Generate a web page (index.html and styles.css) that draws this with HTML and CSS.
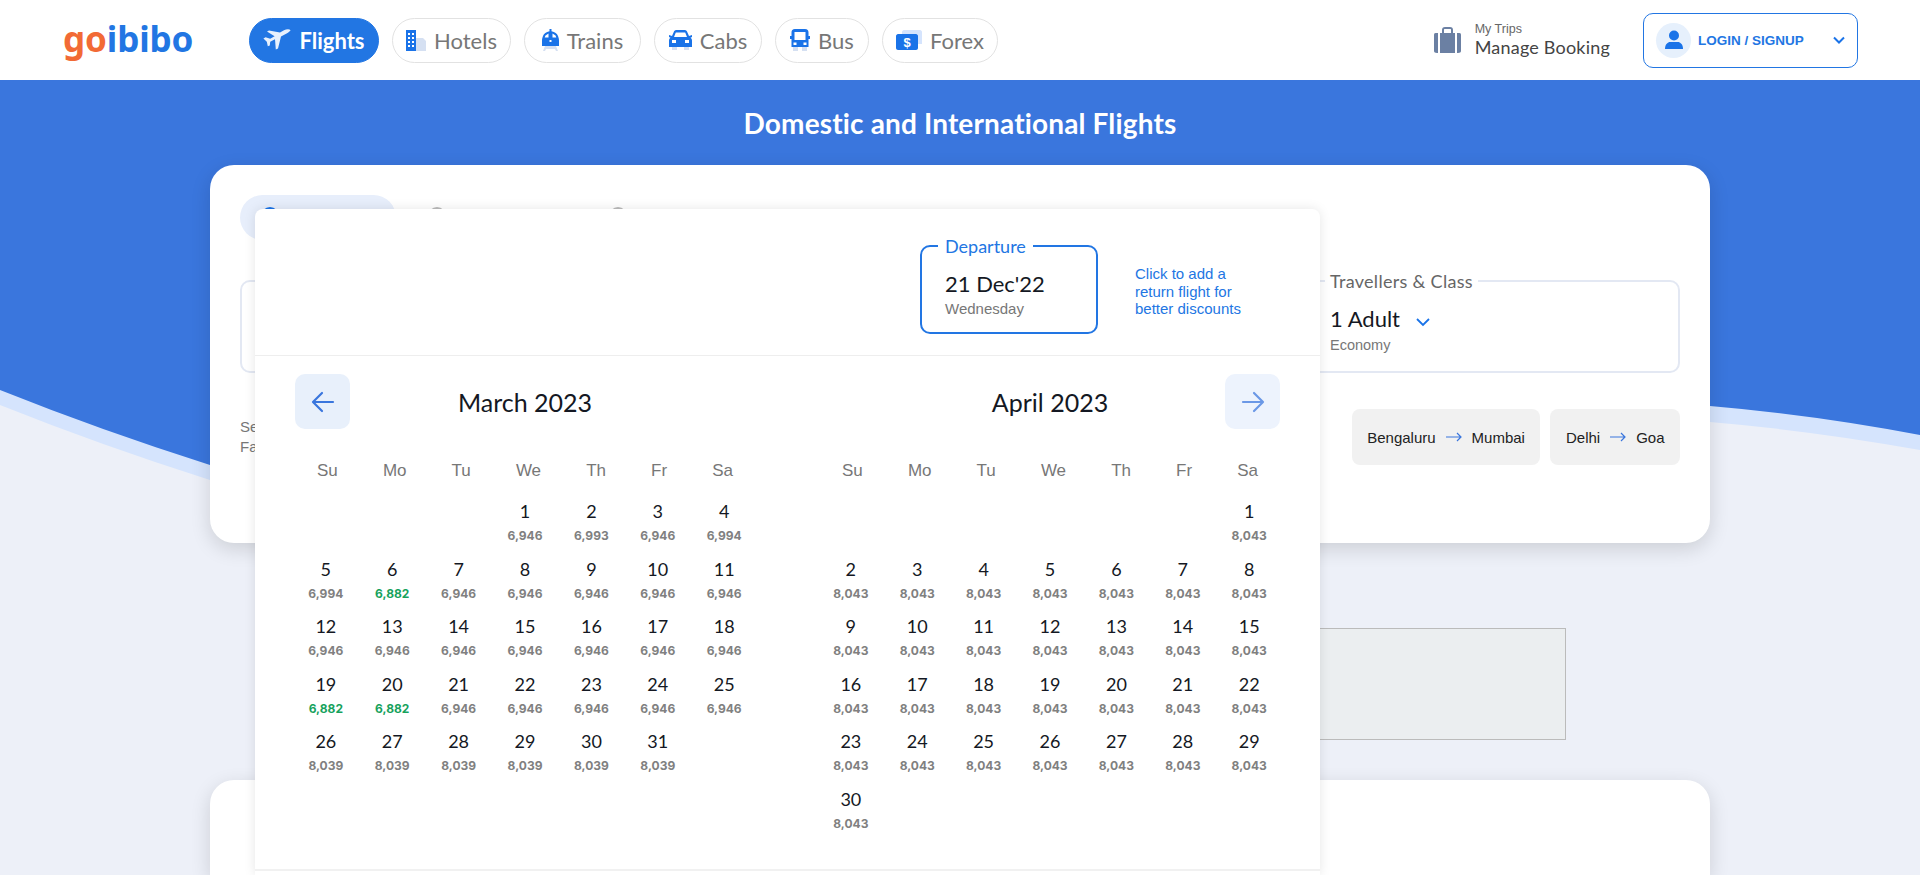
FILE: index.html
```html
<!DOCTYPE html>
<html lang="en">
<head>
	<meta charset="utf-8">
	<title>goibibo - Domestic and International Flights</title>
	<link rel="stylesheet" href="styles.css">
</head>
<body>
	<svg class="wave" width="1920" height="875" viewBox="0 0 1920 875">
		<path fill="#d5e4fd" d="M0 80H1920V450Q1815 431 1710 422L210 480Q100 445 0 405Z"/>
		<path fill="#3a76dd" d="M0 80H1920V435Q1815 415 1710 406L210 465Q100 430 0 390Z"/>
	</svg>
	<header class="topbar">
		<div class="logo"><span class="logo-go">go</span>ibibo</div>
		<nav class="tabs">
			<a class="tab active tab-flights"><svg width="28" height="22" viewBox="0 0 28 22"><path fill="#e8f1fd" d="M27.6 1.2C26.4-.2 23.4 0 21 1.3l-4 2.3L6 1.4 4 2.6l7.6 4.6-4.4 2.6-4.6-1.6L.4 9.4l3.4 3.4 1 4.4 2-.8.4-3.6 4.8-2.6.8 10.4 2.2-1L18 7.4l5.6-3c2-1 3.4-2.2 4-3.2z"/></svg>Flights</a>
			<a class="tab tab-hotels"><svg width="20" height="22" viewBox="0 0 20 22"><path fill="#d5e0f2" d="M9 9h8l3 3v10H9z"/><path fill="#1a73e8" d="M0 1h10v21H0z"/><path fill="#fff" d="M2 4h2v2H2zM6 4h2v2H6zM2 8h2v2H2zM6 8h2v2H6zM2 12h2v2H2zM6 12h2v2H6zM2 16h2v2H2zM6 16h2v2H6z"/></svg>Hotels</a>
			<a class="tab tab-trains"><svg width="17" height="22" viewBox="0 0 17 22"><path fill="#d5e0f2" d="M3 17h11l2 5h-2l-1-2H4l-1 2H1z"/><path fill="#1a73e8" d="M7.5 0h2v2.2C13 3 15 4.500 16 7c.6 1.500 1 3 1 5v5H0v-5c0-2 .4-3.500 1-5 1-2.500 3-4 6.500-4.800z"/><path fill="#fff" d="M3.500 6.500l3-2v4h-3.800zM13.500 6.500l-3-2v4h3.800zM7.500 11h2v2h-2z"/></svg>Trains</a>
			<a class="tab tab-cabs"><svg width="23" height="20" viewBox="0 0 23 20"><path fill="#d5e0f2" d="M3 16h5v4H3zM15 16h5v4h-5z"/><path fill="#1a73e8" d="M5 1.500C5.500.5 6.500 0 7.500 0h8c1 0 2 .5 2.500 1.500L20 6l3-1v2l-1.500.8c1 .7 1.500 1.700 1.500 3V17H0v-6.200c0-1.300.5-2.300 1.500-3L0 7V5l3 1z"/><path fill="#fff" d="M6.800 2.500h9.400L18 7H5zM3 10h4v3H3zM16 10h4v3h-4z"/></svg>Cabs</a>
			<a class="tab tab-bus"><svg width="20" height="22" viewBox="0 0 20 22"><path fill="#d5e0f2" d="M3 17h5v5H3zM12 17h5v5h-5z"/><path fill="#1a73e8" d="M5 0h10c2.500 0 3.500 1.500 3.500 3.500V7H20v3h-1.500v8h-17v-8H0V7h1.500V3.500C1.500 1.500 2.500 0 5 0z"/><path fill="#fff" d="M4.500 3h11v8h-11zM3.500 13.500h3v2.500h-3zM13.500 13.500h3v2.500h-3z"/></svg>Bus</a>
			<a class="tab tab-forex"><svg width="26" height="20" viewBox="0 0 26 20"><path fill="#d5e4fd" d="M8 0h16c1 0 2 1 2 2v12H6V2c0-1 1-2 2-2z"/><path fill="#1a73e8" d="M2 4h18c1 0 2 1 2 2v12c0 1-1 2-2 2H2c-1 0-2-1-2-2V6c0-1 1-2 2-2z"/><text x="11" y="17" class="forex-sign">$</text></svg>Forex</a>
		</nav>
		<a class="trips">
			<svg class="trips-icon" viewBox="0 0 27 26"><path fill="#6b80a3" d="M8 6V3c0-2 1-3 3-3h5c2 0 3 1 3 3v3h-2V3c0-1 0-1-1-1h-5c-1 0-1 0-1 1v3zM0 8c0-2 1-2 3-2h1v20H3c-2 0-3-1-3-2zM6 6h15v20H6zM23 6h1c2 0 3 0 3 2v16c0 1-1 2-3 2h-1z"/></svg>
			<span class="trips-text"><small>My Trips</small><b>Manage Booking</b></span>
		</a>
		<a class="login">
			<span class="avatar"><svg width="20" height="20" viewBox="0 0 20 20"><circle cx="10" cy="5.500" r="5" fill="#1a73e8"/><path fill="#1a73e8" d="M1 19c0-5 3-7 5-7h8c2 0 5 2 5 7z"/></svg></span>
			<span class="login-label">LOGIN / SIGNUP</span>
			<svg class="chevron" width="12" height="8" viewBox="0 0 12 8"><path d="M1 1.500l5 5 5-5" fill="none" stroke="#1a73e8" stroke-width="2"/></svg>
		</a>
	</header>

	<main class="page">
		<h1 class="hero-title">Domestic and International Flights</h1>
		<section class="card search">
			<div class="trip-type">
				<span class="pill"><span class="radio on"></span></span>
				<span class="radio second"></span>
				<span class="radio third"></span>
			</div>
			<div class="search-row">
				<fieldset class="field from"></fieldset>
				<fieldset class="field travellers">
					<legend>Travellers &amp; Class</legend>
					<div class="adult">1 Adult <svg width="14" height="9" viewBox="0 0 14 9"><path d="M1 1l6 6 6-6" fill="none" stroke="#1a73e8" stroke-width="1.800"/></svg></div>
					<div class="econ">Economy</div>
				</fieldset>
			</div>
			<div class="fare-row">
				<p class="fare-note">Select a<br>Fare</p>
				<div class="chips">
					<a class="chip">Bengaluru <svg width="16" height="10" viewBox="0 0 16 10"><path d="M0 5h15M11 1l4 4-4 4" fill="none" stroke="#3a76dd" stroke-width="1.200"/></svg> Mumbai</a>
					<a class="chip">Delhi <svg width="16" height="10" viewBox="0 0 16 10"><path d="M0 5h15M11 1l4 4-4 4" fill="none" stroke="#3a76dd" stroke-width="1.200"/></svg> Goa</a>
				</div>
			</div>
		</section>
		<div class="ad-slot"></div>
		<section class="card lower"></section>
	</main>

	<section class="calendar">
		<div class="cal-head">
			<div class="dep-box">
				<span class="dep-label">Departure</span>
				<div class="dep-date">21 Dec'22</div>
				<div class="dep-day">Wednesday</div>
			</div>
			<p class="return-note">Click to add a<br>return flight for<br>better discounts</p>
		</div>
		<div class="months">
			<div class="month">
				<div class="month-head">
					<a class="nav-btn"><svg width="24" height="22" viewBox="0 0 24 22"><path d="M22 11H3M11 2l-9 9 9 9" fill="none" stroke="#3a76dd" stroke-width="2.200" stroke-linecap="round" stroke-linejoin="round"/></svg></a>
					<h2>March 2023</h2>
				</div>
				<div class="week"><span>Su</span><span>Mo</span><span>Tu</span><span>We</span><span>Th</span><span>Fr</span><span>Sa</span></div>
				<div class="days">
					<div></div><div></div><div></div>
					<div><b>1</b><i>6,946</i></div><div><b>2</b><i>6,993</i></div><div><b>3</b><i>6,946</i></div><div><b>4</b><i>6,994</i></div>
					<div><b>5</b><i>6,994</i></div><div class="low"><b>6</b><i>6,882</i></div><div><b>7</b><i>6,946</i></div><div><b>8</b><i>6,946</i></div><div><b>9</b><i>6,946</i></div><div><b>10</b><i>6,946</i></div><div><b>11</b><i>6,946</i></div>
					<div><b>12</b><i>6,946</i></div><div><b>13</b><i>6,946</i></div><div><b>14</b><i>6,946</i></div><div><b>15</b><i>6,946</i></div><div><b>16</b><i>6,946</i></div><div><b>17</b><i>6,946</i></div><div><b>18</b><i>6,946</i></div>
					<div class="low"><b>19</b><i>6,882</i></div><div class="low"><b>20</b><i>6,882</i></div><div><b>21</b><i>6,946</i></div><div><b>22</b><i>6,946</i></div><div><b>23</b><i>6,946</i></div><div><b>24</b><i>6,946</i></div><div><b>25</b><i>6,946</i></div>
					<div><b>26</b><i>8,039</i></div><div><b>27</b><i>8,039</i></div><div><b>28</b><i>8,039</i></div><div><b>29</b><i>8,039</i></div><div><b>30</b><i>8,039</i></div><div><b>31</b><i>8,039</i></div>
				</div>
			</div>
			<div class="month">
				<div class="month-head">
					<h2>April 2023</h2>
					<a class="nav-btn next"><svg width="24" height="22" viewBox="0 0 24 22"><path d="M2 11h19M13 2l9 9-9 9" fill="none" stroke="#6b98e6" stroke-width="2.200" stroke-linecap="round" stroke-linejoin="round"/></svg></a>
				</div>
				<div class="week"><span>Su</span><span>Mo</span><span>Tu</span><span>We</span><span>Th</span><span>Fr</span><span>Sa</span></div>
				<div class="days">
					<div></div><div></div><div></div><div></div><div></div><div></div>
					<div><b>1</b><i>8,043</i></div>
					<div><b>2</b><i>8,043</i></div><div><b>3</b><i>8,043</i></div><div><b>4</b><i>8,043</i></div><div><b>5</b><i>8,043</i></div><div><b>6</b><i>8,043</i></div><div><b>7</b><i>8,043</i></div><div><b>8</b><i>8,043</i></div>
					<div><b>9</b><i>8,043</i></div><div><b>10</b><i>8,043</i></div><div><b>11</b><i>8,043</i></div><div><b>12</b><i>8,043</i></div><div><b>13</b><i>8,043</i></div><div><b>14</b><i>8,043</i></div><div><b>15</b><i>8,043</i></div>
					<div><b>16</b><i>8,043</i></div><div><b>17</b><i>8,043</i></div><div><b>18</b><i>8,043</i></div><div><b>19</b><i>8,043</i></div><div><b>20</b><i>8,043</i></div><div><b>21</b><i>8,043</i></div><div><b>22</b><i>8,043</i></div>
					<div><b>23</b><i>8,043</i></div><div><b>24</b><i>8,043</i></div><div><b>25</b><i>8,043</i></div><div><b>26</b><i>8,043</i></div><div><b>27</b><i>8,043</i></div><div><b>28</b><i>8,043</i></div><div><b>29</b><i>8,043</i></div>
					<div><b>30</b><i>8,043</i></div>
				</div>
			</div>
		</div>
		<div class="cal-foot"></div>
	</section>
</body>
</html>
```

FILE: styles.css
```css
* {
	box-sizing: border-box;
}
html, body {
	height: 875px;
	overflow: hidden;
}
body {
	margin: 0;
	position: relative;
	background: #edf0f8;
	color: #141823;
	font-family: Lato, "Noto Sans", sans-serif;
}
.wave {
	position: absolute;
	left: 0;
	top: 0;
}

/* top bar */
.topbar {
	position: relative;
	display: flex;
	align-items: center;
	height: 80px;
	padding: 0 62px 0 63px;
	background: #fff;
}
.logo {
	width: 186px;
	margin-top: -3px;
	color: #2276e3;
	font-family: "Noto Sans", sans-serif;
	font-size: 35px;
	font-weight: 700;
	letter-spacing: -0.1px;
}
.logo-go {
	color: #f26a35;
}
.tabs {
	display: flex;
	gap: 13px;
}
.tab {
	display: flex;
	align-items: center;
	justify-content: center;
	gap: 8px;
	height: 45px;
	border: 1px solid #e2e2e2;
	border-radius: 23px;
	color: #777;
	font-size: 22px;
}
.tab.active {
	border-color: #2276e3;
	background: #2276e3;
	color: #fff;
	font-weight: 700;
}
.tab-flights { width: 130px; }
.tab-hotels { width: 119px; }
.tab-trains { width: 117px; }
.tab-cabs { width: 108px; }
.tab-bus { width: 94px; }
.tab-forex { width: 116px; }
.forex-sign {
	fill: #fff;
	font-family: "Liberation Sans", sans-serif;
	font-size: 13px;
	font-weight: 700;
	text-anchor: middle;
}
.trips {
	display: flex;
	align-items: center;
	gap: 14px;
	margin-left: auto;
	margin-right: 33px;
}
.trips-icon {
	width: 27px;
	height: 26px;
}
.trips-text small {
	display: block;
	color: #666;
	font-family: "Liberation Sans", sans-serif;
	font-size: 12.5px;
}
.trips-text b {
	display: block;
	color: #444;
	font-size: 18px;
	font-weight: 400;
	letter-spacing: 0.2px;
}
.login {
	display: flex;
	align-items: center;
	width: 215px;
	height: 55px;
	padding: 0 12px;
	border: 1px solid #2276e3;
	border-radius: 10px;
}
.avatar {
	display: flex;
	align-items: center;
	justify-content: center;
	width: 35px;
	height: 35px;
	border-radius: 50%;
	background: #e6f0fc;
}
.login-label {
	margin-left: 7px;
	color: #2276e3;
	font-family: "Liberation Sans", sans-serif;
	font-size: 13.5px;
	font-weight: 700;
}
.chevron {
	margin-left: auto;
}

/* page behind the calendar */
.page {
	position: relative;
	width: 1500px;
	margin: 0 auto;
}
.hero-title {
	height: 85px;
	margin: 0;
	padding-top: 24px;
	color: #fff;
	font-size: 28px;
	font-weight: 700;
	letter-spacing: 0.15px;
	line-height: 38px;
	text-align: center;
}
.card {
	border-radius: 24px;
	background: #fff;
	box-shadow: 0 6px 20px rgba(0, 0, 0, 0.14);
}
.search {
	height: 378px;
	padding: 30px 30px 0;
}
.trip-type {
	display: flex;
	align-items: flex-start;
	height: 85px;
}
.pill {
	display: block;
	width: 156px;
	height: 45px;
	padding: 12px 0 0 21px;
	border-radius: 23px;
	background: #e7eefb;
}
.radio {
	display: block;
	width: 18px;
	height: 18px;
	border-radius: 50%;
	background: #bbb;
}
.radio.on {
	background: #1a73e8;
}
.radio.second {
	margin: 12px 0 0 32px;
}
.radio.third {
	margin: 12px 0 0 163px;
}
.search-row {
	display: flex;
	justify-content: space-between;
}
.field {
	height: 93px;
	margin: 0;
	padding: 0;
	border: 2px solid #e3e8f3;
	border-radius: 10px;
}
.from {
	width: 300px;
}
.travellers {
	width: 370px;
	padding: 0 0 0 13px;
}
.travellers legend {
	padding: 0 5px;
	color: #666;
	font-size: 18px;
	letter-spacing: 0.3px;
	line-height: 2px;
}
.adult {
	margin-top: 23px;
	padding-left: 5px;
	color: #141823;
	font-size: 22px;
	line-height: 28px;
}
.adult svg {
	margin-left: 10px;
}
.econ {
	margin-top: 4px;
	padding-left: 5px;
	color: #777;
	font-family: "Liberation Sans", sans-serif;
	font-size: 14.5px;
}
.fare-row {
	display: flex;
	justify-content: space-between;
	margin-top: 36px;
}
.fare-note {
	margin: 8px 0 0;
	color: #777;
	font-family: "Liberation Sans", sans-serif;
	font-size: 15px;
	line-height: 20px;
}
.chips {
	display: flex;
	gap: 10px;
}
.chip {
	display: flex;
	align-items: center;
	gap: 10px;
	height: 56px;
	padding: 0 15.5px;
	border-radius: 8px;
	background: #f1f1f1;
	color: #222;
	font-family: "Liberation Sans", sans-serif;
	font-size: 15px;
}
.ad-slot {
	width: 1200px;
	height: 112px;
	margin: 85px 0 0 156px;
	border: 1px solid #bbb;
	background: #ebeef0;
}
.lower {
	height: 95px;
	margin-top: 40px;
	border-radius: 24px 24px 0 0;
}

/* calendar popup */
.calendar {
	position: absolute;
	left: 255px;
	top: 209px;
	width: 1065px;
	height: 666px;
	border-radius: 8px 8px 0 0;
	background: #fff;
	box-shadow: 0 0 12px rgba(0, 0, 0, 0.1);
}
.cal-head {
	display: flex;
	align-items: flex-start;
	height: 147px;
	padding: 36px 0 0 665px;
	border-bottom: 1px solid #eee;
}
.dep-box {
	position: relative;
	width: 178px;
	height: 89px;
	padding: 23px 0 0 23px;
	border: 2px solid #2276e3;
	border-radius: 10px;
}
.dep-label {
	position: absolute;
	left: 16px;
	top: -12px;
	padding: 0 7px;
	background: #fff;
	color: #2276e3;
	font-size: 18px;
	line-height: 22px;
}
.dep-date {
	font-size: 22px;
	line-height: 28px;
}
.dep-day {
	margin-top: 2px;
	color: #777;
	font-family: "Liberation Sans", sans-serif;
	font-size: 15px;
}
.return-note {
	margin: 20px 0 0 37px;
	color: #2276e3;
	font-family: "Liberation Sans", sans-serif;
	font-size: 15px;
	line-height: 17.5px;
}
.months {
	display: flex;
	gap: 65px;
	height: 513px;
	padding: 0 40px;
}
.month {
	width: 460px;
}
.month-head {
	position: relative;
	display: flex;
	align-items: center;
	justify-content: center;
	height: 55px;
	margin-top: 18px;
}
.month-head h2 {
	margin: 0;
	font-size: 25px;
	font-weight: 400;
}
.nav-btn {
	position: absolute;
	left: 0;
	top: 0;
	display: flex;
	align-items: center;
	justify-content: center;
	width: 55px;
	height: 55px;
	border-radius: 10px;
	background: #e8f0fb;
}
.nav-btn.next {
	left: auto;
	right: 0;
	background: #edf3fd;
}
.week {
	display: flex;
	justify-content: space-between;
	margin: 32px 22px 0;
	color: #777;
	font-family: "Liberation Sans", sans-serif;
	font-size: 17px;
	line-height: 20px;
}
.days {
	display: grid;
	grid-template-columns: repeat(7, 66.4px);
	grid-auto-rows: 57.5px;
	justify-content: center;
	margin-top: 18px;
	text-align: center;
}
.days b {
	display: block;
	font-size: 18px;
	font-weight: 400;
	line-height: 24px;
}
.days i {
	display: block;
	margin-top: 5px;
	color: #808080;
	font-family: Inter, sans-serif;
	font-size: 12px;
	font-style: normal;
	font-weight: 700;
	line-height: 16px;
}
.days .low i {
	color: #17a25d;
}
.cal-foot {
	height: 6px;
	border-top: 2px solid #f1f1f1;
}
```
